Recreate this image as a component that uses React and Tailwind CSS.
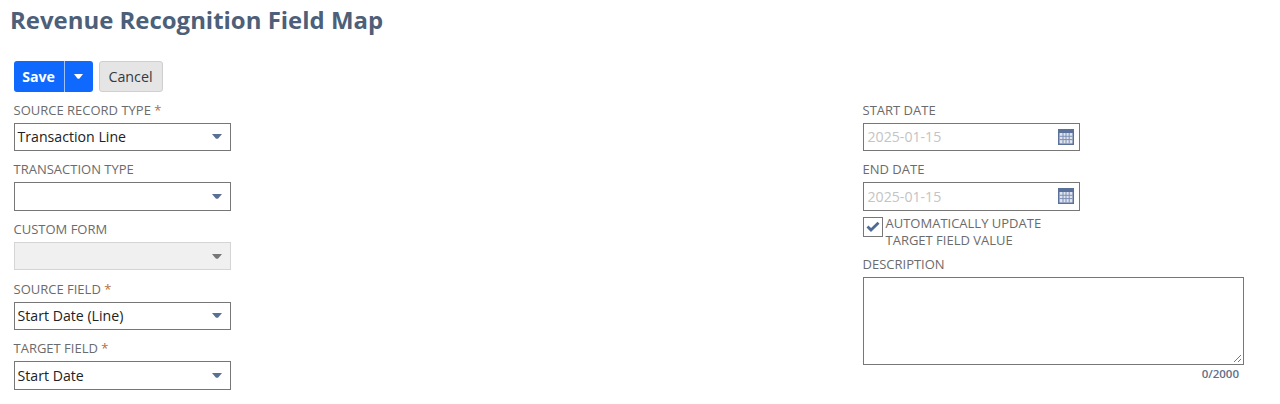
const Arrow = ({ disabled }) => (
  <svg width="10" height="5" viewBox="0 0 10 5" className="shrink-0">
    <path d="M0 0H10L6.2 4.4Q5 5 3.8 4.4Z" fill={disabled ? "#77777a" : "#5a6f94"} />
  </svg>
);

const Calendar = () => (
  <svg width="16" height="16" viewBox="0 0 16 16" className="shrink-0">
    <rect x="0" y="0" width="16" height="16" fill="#5a719c" />
    <rect x="1.5" y="4" width="13" height="10.5" fill="#dfe4ee" />
    <path d="M5 4V14.5M8 4V14.5M11.2 4V14.5M1.5 7.3H14.5M1.5 10.6H14.5" stroke="#7d90b4" strokeWidth="1" fill="none" />
  </svg>
);

const Label = ({ children, required }) => (
  <div className="h-[17px] text-[13px] leading-[17px] text-[#6b6b6b] uppercase">
    {children}
    {required && <span className="text-[#b4703a]"> *</span>}
  </div>
);

const Select = ({ value, disabled }) => (
  <div
    className={
      disabled
        ? "mt-1 flex h-[28.5px] w-[217.5px] items-center justify-between border border-[#d5d5d5] bg-[#f0f0f0] pr-[8.5px] pl-[3px] text-[14.15px] text-[#222]"
        : "mt-1 flex h-[28.5px] w-[217.5px] items-center justify-between border border-[#777] bg-white pr-[8.5px] pl-[3px] text-[14.15px] text-[#222]"
    }
  >
    <span>{value}</span>
    <Arrow disabled={disabled} />
  </div>
);

const DateField = ({ value }) => (
  <div className="mt-1 flex h-[28.5px] w-[217.5px] items-center justify-between border border-[#777] bg-white pr-[5px] pl-1 text-[14.15px] text-[#c4c4c4]">
    <span>{value}</span>
    <Calendar />
  </div>
);

const fields = [
  { label: "Source Record Type", required: true, value: "Transaction Line" },
  { label: "Transaction Type" },
  { label: "Custom Form", disabled: true },
  { label: "Source Field", required: true, value: "Start Date (Line)" },
  { label: "Target Field", required: true, value: "Start Date" },
];

export default function App() {
  return (
    <div className="h-[404px] w-[1280px] overflow-hidden bg-white font-['Open_Sans',sans-serif]">
      <h1 className="pt-[3px] pl-[10px] text-[23.95px] leading-[33px] font-bold text-[#4d5f79]">
        Revenue Recognition Field Map
      </h1>
      <div className="mt-[25px] ml-[13.5px] flex gap-[6px]">
        <div className="flex h-[31px] overflow-hidden rounded-[3px] bg-[#0f69ff] text-white">
          <div className="flex w-[50px] items-center justify-center text-[14.15px] font-bold">Save</div>
          <div className="flex w-[29px] items-center justify-center border-l border-[#9cc2ff]">
            <svg width="9" height="5" viewBox="0 0 9 5">
              <path d="M0 0H9L5.5 4.4Q4.5 5 3.5 4.4Z" fill="#fff" />
            </svg>
          </div>
        </div>
        <div className="flex h-[31px] w-[64px] items-center justify-center rounded-[3px] border border-[#cfcfcf] bg-[#e5e5e5] text-[14.3px] font-medium text-[#333a45]">
          Cancel
        </div>
      </div>
      <div className="mt-[9.5px] flex">
        <div className="ml-[13.5px] flex w-[849px] flex-col gap-[10.2px]">
          {fields.map((f) => (
            <div key={f.label}>
              <Label required={f.required}>{f.label}</Label>
              <Select value={f.value} disabled={f.disabled} />
            </div>
          ))}
        </div>
        <div className="flex w-[381px] flex-col">
          <Label>Start Date</Label>
          <DateField value="2025-01-15" />
          <div className="mt-[10.2px]">
            <Label>End Date</Label>
          </div>
          <DateField value="2025-01-15" />
          <div className="mt-[6px] flex items-start gap-[3px]">
            <div className="flex size-5 items-center justify-center border border-[#777] bg-white">
              <svg width="14" height="11" viewBox="0 0 14 11">
                <path d="M1.5 5.5L5 9L12.5 1.8" stroke="#4f6a97" strokeWidth="2.8" fill="none" />
              </svg>
            </div>
            <div className="-mt-[2px] text-[13px] leading-[17px] text-[#6b6b6b] uppercase">
              Automatically update
              <br />
              target field value
            </div>
          </div>
          <div className="mt-[7.8px]">
            <Label>Description</Label>
          </div>
          <div className="relative mt-1 h-[88px] w-[381px] border border-[#777] bg-white">
            <svg width="9" height="9" viewBox="0 0 9 9" className="absolute right-px bottom-px">
              <path d="M1 8L8 1M5 8L8 5" stroke="#777" strokeWidth="1" fill="none" />
            </svg>
          </div>
          <div className="mt-[0.5px] w-[376.5px] text-right text-[11.5px] leading-[15px] font-semibold text-[#5f6f88]">0/2000</div>
        </div>
      </div>
    </div>
  );
}
